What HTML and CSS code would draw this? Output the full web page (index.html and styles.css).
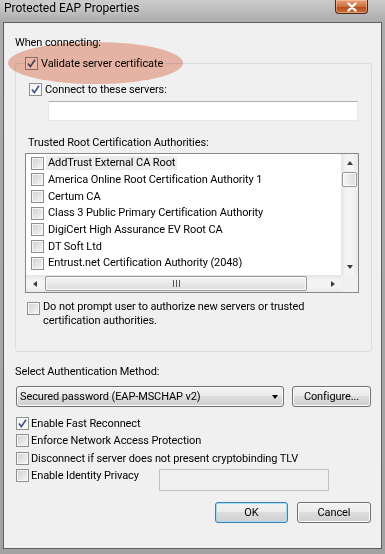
FILE: index.html
```html
<!DOCTYPE html>
<html lang="en">
<head>
    <meta charset="UTF-8">
    <meta name="viewport" content="width=device-width, initial-scale=1.0">
    <title>Protected EAP Properties</title>
    <link rel="stylesheet" href="styles.css">
</head>
<body>
    <div class="window">
        <div class="titlebar">
            <span class="title">Protected EAP Properties</span>
            <span class="close-btn">
                <svg width="14" height="10" viewBox="0 0 14 10"><path d="M3.5 1.5 L10.5 8.5 M10.5 1.5 L3.5 8.5" stroke="#fff" stroke-width="2.4" stroke-linecap="round"/></svg>
            </span>
        </div>

        <div class="client">
            <!-- red mark over the first option -->
            <div class="highlight"></div>

            <div class="label when">When connecting:</div>

            <fieldset class="group">
                <legend>
                    <span class="check"><span class="cb checked"><svg width="11" height="11" viewBox="0 0 11 11"><path d="M2 5.5 L4.3 8.6 L9 1.8" fill="none" stroke="#3f5287" stroke-width="1.6"/></svg></span>Validate server certificate</span>
                </legend>

                <div class="check connect"><span class="cb checked"><svg width="11" height="11" viewBox="0 0 11 11"><path d="M2 5.5 L4.3 8.6 L9 1.8" fill="none" stroke="#3f5287" stroke-width="1.6"/></svg></span>Connect to these servers:</div>
                <div class="textbox servers"></div>

                <div class="label trusted">Trusted Root Certification Authorities:</div>
                <div class="listbox">
                    <div class="rows">
                        <div class="row"><span class="cb"></span><span class="item focus">AddTrust External CA Root</span></div>
                        <div class="row"><span class="cb"></span><span class="item">America Online Root Certification Authority 1</span></div>
                        <div class="row"><span class="cb"></span><span class="item">Certum CA</span></div>
                        <div class="row"><span class="cb"></span><span class="item">Class 3 Public Primary Certification Authority</span></div>
                        <div class="row"><span class="cb"></span><span class="item">DigiCert High Assurance EV Root CA</span></div>
                        <div class="row"><span class="cb"></span><span class="item">DT Soft Ltd</span></div>
                        <div class="row"><span class="cb"></span><span class="item">Entrust.net Certification Authority (2048)</span></div>
                    </div>
                    <div class="vscroll">
                        <span class="sb-btn"><span class="tri up"></span></span>
                        <span class="thumb-v"></span>
                        <span class="sb-fill"></span>
                        <span class="sb-btn"><span class="tri down"></span></span>
                    </div>
                    <div class="hscroll">
                        <span class="sb-btn"><span class="tri left"></span></span>
                        <span class="thumb-h"><span class="grip"></span></span>
                        <span class="sb-fill"></span>
                        <span class="sb-btn"><span class="tri right"></span></span>
                    </div>
                    <div class="corner"></div>
                </div>

                <div class="check prompt"><span class="cb"></span><span>Do not prompt user to authorize new servers or trusted<br>certification authorities.</span></div>
            </fieldset>

            <div class="label method">Select Authentication Method:</div>
            <div class="method-row">
                <div class="combo">Secured password (EAP-MSCHAP v2)<span class="combo-arrow"></span></div>
                <div class="button configure">Configure...</div>
            </div>

            <div class="options">
                <div class="check opt"><span class="cb checked"><svg width="11" height="11" viewBox="0 0 11 11"><path d="M2 5.5 L4.3 8.6 L9 1.8" fill="none" stroke="#3f5287" stroke-width="1.6"/></svg></span>Enable Fast Reconnect</div>
                <div class="check opt"><span class="cb"></span>Enforce Network Access Protection</div>
                <div class="check opt"><span class="cb"></span>Disconnect if server does not present cryptobinding TLV</div>
                <div class="identity-row">
                    <div class="check opt identity"><span class="cb"></span>Enable Identity Privacy</div>
                    <div class="textbox identity-box"></div>
                </div>
            </div>

            <div class="buttons">
                <div class="button default">OK</div>
                <div class="button cancel">Cancel</div>
            </div>
        </div>
    </div>
</body>
</html>
```

FILE: styles.css
```css
* {
    box-sizing: border-box;
}

body {
    margin: 0;
    font-family: Roboto, "Liberation Sans", sans-serif;
    font-size: 11px;
    letter-spacing: -0.1px;
    color: #000;
}

.window {
    width: 385px;
    height: 554px;
    background: linear-gradient(#cbcbcb, #acacac 22px, #a2a2a2);
}

/* Barra de titulo */
.titlebar {
    height: 22px;
    display: flex;
    align-items: flex-start;
}

.title {
    padding: 1px 0 0 4px;
    font-size: 12px;
    letter-spacing: 0;
    line-height: 15px;
    text-shadow: 0 0 6px #ececec;
}

.close-btn {
    margin-left: auto;
    margin-right: 17px;
    width: 33px;
    height: 14px;
    border: 1px solid #4b2a1d;
    border-top: none;
    border-radius: 0 0 4px 4px;
    background: linear-gradient(#e5a07a, #d0703f 50%, #b44a1e 51%, #c9703c);
    box-shadow: inset 0 0 0 1px rgba(255, 215, 180, 0.45);
    display: flex;
    align-items: center;
    justify-content: center;
}

/* Area cliente */
.client {
    position: relative;
    width: 379px;
    height: 527px;
    margin-left: 3px;
    border: 1px solid #5e5e5e;
    background: #f0f0f0;
    padding: 0 9px 0 11px;
}

.highlight {
    position: absolute;
    left: 4px;
    top: 19px;
    width: 175px;
    height: 42px;
    border-radius: 50%;
    background: #f4bead;
    mix-blend-mode: multiply;
    pointer-events: none;
    z-index: 2;
}

.label {
    line-height: 15px;
    white-space: nowrap;
}

.when {
    margin-top: 12px;
}

.group {
    margin: 6px 0 0;
    padding: 0 13px 23px 9px;
    border: 1px solid #d5dfe5;
    border-radius: 3px;
    min-width: 0;
}

.group legend {
    padding: 0 2px 0 0;
    line-height: 15px;
}

/* Casillas */
.check {
    display: flex;
    align-items: center;
    line-height: 15px;
    white-space: nowrap;
}

.cb {
    width: 13px;
    height: 13px;
    flex: none;
    margin-right: 3px;
    border: 1px solid #8f8f8f;
    background: linear-gradient(135deg, #d0d0d0, #f7f7f7);
    box-shadow: inset 0 0 0 1px #f6f6f6;
}

.cb.checked {
    background: linear-gradient(135deg, #ececec, #ffffff);
}

.cb svg {
    display: block;
}

.connect {
    margin: 11px 0 0 4px;
}

.textbox {
    border: 1px solid #e3e9ef;
    border-top-color: #abadb3;
    background: #fff;
}

.servers {
    margin: 4px 0 0 23px;
    width: 310px;
    height: 20px;
}

.trusted {
    margin: 14px 0 0 3px;
}

/* Lista de certificados */
.listbox {
    margin-top: 3px;
    width: 334px;
    height: 140px;
    border: 1px solid #828790;
    background: #fff;
    display: grid;
    grid-template-columns: 1fr 17px;
    grid-template-rows: 1fr 17px;
}

.rows {
    padding: 1px 0 0 5px;
    overflow: hidden;
}

.row {
    height: 16.67px;
    display: flex;
    align-items: center;
    white-space: nowrap;
}

.row .cb {
    margin-right: 2px;
}

.item {
    padding: 0 2px;
    line-height: 14px;
}

.item.focus {
    background: #ececec;
}

.vscroll,
.hscroll {
    display: flex;
    align-items: center;
    background: #f1f1f1;
}

.vscroll {
    flex-direction: column;
    background: linear-gradient(to right, #e4e4e4, #f4f4f4 30%, #f4f4f4 70%, #e8e8e8);
}

.hscroll {
    background: linear-gradient(#e4e4e4, #f4f4f4 30%, #f4f4f4 70%, #e8e8e8);
}

.sb-btn {
    width: 17px;
    height: 17px;
    flex: none;
    display: flex;
    align-items: center;
    justify-content: center;
}

.sb-fill {
    flex: 1;
}

.tri {
    width: 0;
    height: 0;
}

.tri.up {
    border-left: 3.5px solid transparent;
    border-right: 3.5px solid transparent;
    border-bottom: 4px solid #3c3c3c;
}

.tri.down {
    border-left: 3.5px solid transparent;
    border-right: 3.5px solid transparent;
    border-top: 4px solid #3c3c3c;
}

.tri.left {
    border-top: 3.5px solid transparent;
    border-bottom: 3.5px solid transparent;
    border-right: 4px solid #3c3c3c;
}

.tri.right {
    border-top: 3.5px solid transparent;
    border-bottom: 3.5px solid transparent;
    border-left: 4px solid #3c3c3c;
}

.thumb-v {
    margin-top: 1px;
    width: 15px;
    height: 15px;
    flex: none;
    border: 1px solid #979797;
    border-radius: 2px;
    background: linear-gradient(to right, #f6f6f6, #dcdcdc);
    box-shadow: inset 0 0 0 1px #fdfdfd;
}

.thumb-h {
    margin-left: 2px;
    width: 262px;
    height: 15px;
    flex: none;
    border: 1px solid #979797;
    border-radius: 2px;
    background: linear-gradient(#f6f6f6, #dcdcdc);
    box-shadow: inset 0 0 0 1px #fdfdfd;
    display: flex;
    align-items: center;
    justify-content: center;
}

.grip {
    width: 7px;
    height: 7px;
    background: repeating-linear-gradient(to right, #555 0 1px, transparent 1px 3px);
}

.corner {
    background: #f0f0f0;
}

.prompt {
    margin: 7px 0 0 2px;
    align-items: flex-start;
    line-height: 14px;
}

.prompt .cb {
    margin-top: 2px;
}

/* Metodo de autenticacion */
.method {
    margin-top: 12px;
}

.method-row {
    display: flex;
    margin-top: 7px;
}

.button,
.combo {
    height: 21px;
    border: 1px solid #707070;
    border-radius: 3px;
    background: linear-gradient(#f2f2f2, #ebebeb 50%, #dddddd 50%, #cfcfcf);
    box-shadow: inset 0 0 0 1px #fbfbfb;
}

.combo {
    margin-left: 1px;
    width: 268px;
    display: flex;
    align-items: center;
    padding: 0 5px 0 3px;
    white-space: nowrap;
}

.combo-arrow {
    margin-left: auto;
    border-left: 3.5px solid transparent;
    border-right: 3.5px solid transparent;
    border-top: 4px solid #000;
}

.button {
    display: flex;
    align-items: center;
    justify-content: center;
}

.configure {
    margin-left: 8px;
    width: 79px;
}

.options {
    margin: 7.5px 0 0 1px;
}

.opt {
    height: 17.5px;
}

.opt .cb {
    margin-right: 2px;
}

.identity-row {
    display: flex;
    align-items: flex-start;
}

.identity {
    width: 143px;
}

.identity-box {
    margin-top: 2px;
    width: 170px;
    height: 22px;
    background: #f0f0f0;
    border-color: #c2c2c2;
}

.buttons {
    display: flex;
    justify-content: flex-end;
    gap: 9px;
    margin-top: 10.5px;
    padding-right: 1px;
}

.default {
    width: 73px;
    border-color: #3c7fb1;
    box-shadow: inset 0 0 0 1px #a6dcf3;
}

.cancel {
    width: 74px;
}
```
